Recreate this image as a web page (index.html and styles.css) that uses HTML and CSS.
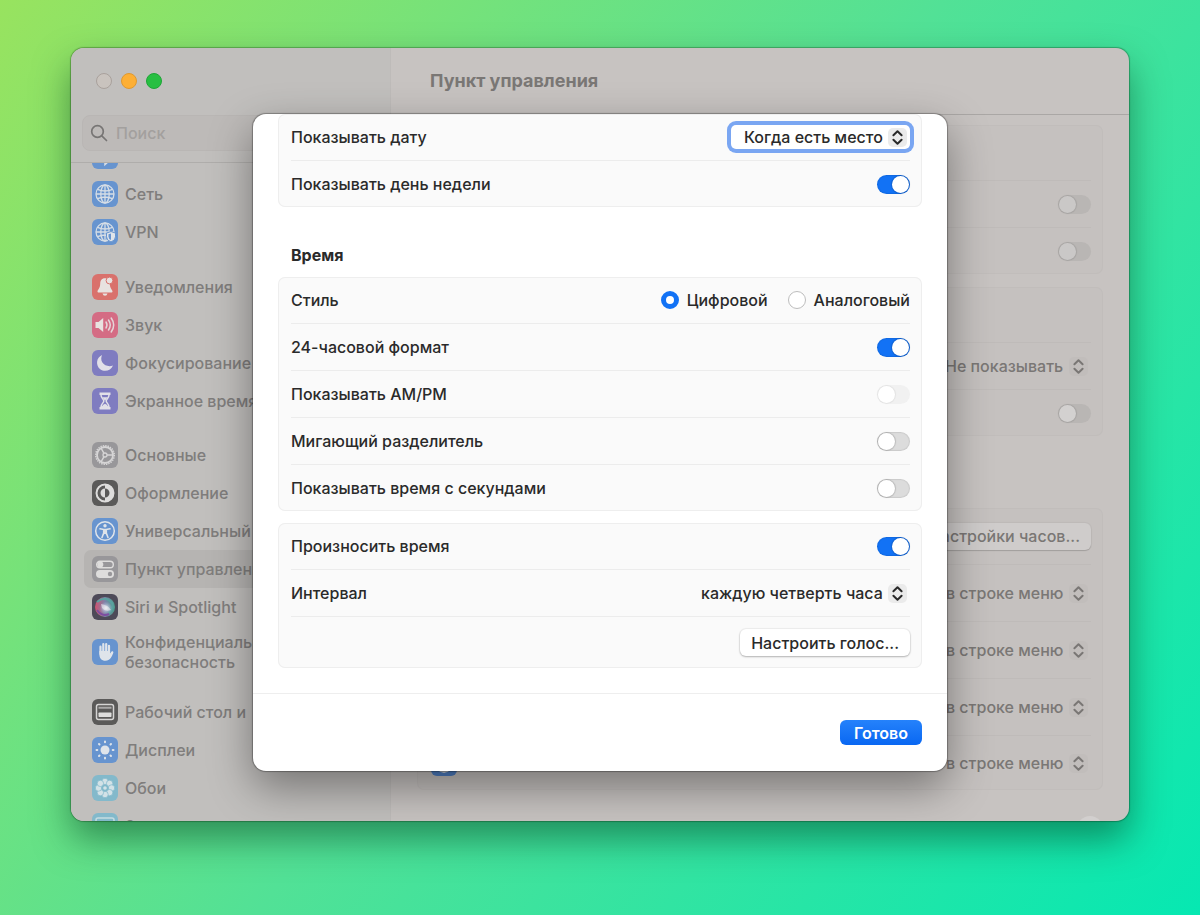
FILE: index.html
```html
<!DOCTYPE html>
<html lang="ru">
<head>
<meta charset="utf-8">
<meta name="viewport" content="width=device-width, initial-scale=1">
<title>Пункт управления</title>
<link rel="stylesheet" href="styles.css">
</head>
<body>
<svg class="defs" aria-hidden="true">
  <defs>
    <symbol id="updown" viewBox="0 0 19 19"><path d="M5.400 7.300 9.500 3.300l4.100 4M5.400 11.700l4.100 4 4.100-4" fill="none" stroke="currentColor" stroke-width="2" stroke-linecap="round" stroke-linejoin="round"/></symbol>
    <symbol id="globe" viewBox="0 0 26 26"><g fill="none" stroke="#d5dde6" stroke-width="1.3"><circle cx="13" cy="13" r="9"/><ellipse cx="13" cy="13" rx="4.2" ry="9"/><path d="M4 13h18M13 4v18M5.5 8.3q7.500 3.400 15 0M5.500 17.700q7.500-3.400 15 0"/></g></symbol>
  </defs>
</svg>
<div class="window">
  <aside class="sidebar">
    <div class="lights"><button class="light" aria-label="Закрыть"></button><button class="light light-min" aria-label="Свернуть"></button><button class="light light-max" aria-label="Развернуть"></button></div>
    <label class="search">
      <svg width="18" height="18" viewBox="0 0 18 18" fill="none" stroke="#777574" stroke-width="1.7" stroke-linecap="round"><circle cx="7.500" cy="7.500" r="5.800"/><path d="m11.800 11.800 4.700 4.700"/></svg>
      <input type="search" placeholder="Поиск" aria-label="Поиск">
    </label>
    <nav class="nav">
      <ul class="group group-first">
        <li><a href="#bluetooth" class="item" aria-label="Bluetooth"><svg class="icon blue" viewBox="0 0 26 26"><path d="m8 8 10 9-5 4.500V4.500L18 9 8 18" fill="none" stroke="#d5dde6" stroke-width="1.600"/></svg></a></li>
        <li><a href="#network" class="item"><svg class="icon blue" viewBox="0 0 26 26"><use href="#globe"/></svg>Сеть</a></li>
        <li><a href="#vpn" class="item"><svg class="icon blue" viewBox="0 0 26 26"><use href="#globe"/><path d="M19 12.500l4.500 1.600v3.700q0 3.500-4.500 5.200-4.500-1.700-4.500-5.200v-3.700z" fill="#dfe4ea" stroke="#6794cf"/><path d="M19 14.500v6.500q-2.500-1-2.500-3.500v-2.200z" fill="#6794cf"/></svg>VPN</a></li>
      </ul>
      <ul class="group">
        <li><a href="#notifications" class="item"><svg class="icon red" viewBox="0 0 26 26"><path d="M13 4.200c-3.600 0-4.800 2.700-4.800 5.600 0 4.600-2.700 6-2.700 7.700 0 .8.500 1 1.200 1h12.600c.7 0 1.200-.2 1.200-1 0-1.700-2.700-3.100-2.700-7.700 0-2.900-1.200-5.600-4.800-5.600zM10.500 19.600h5q-.6 2.200-2.500 2.200t-2.500-2.200z" fill="#e8e2e0"/><circle cx="17.500" cy="6.500" r="3.400" fill="#e8e2e0" stroke="#d9716c"/></svg>Уведомления</a></li>
        <li><a href="#sound" class="item"><svg class="icon pink" viewBox="0 0 26 26"><path d="M3.500 10h3l4.700-4v14l-4.700-4h-3z" fill="#e8e2e0"/><path d="M14 10q2 3 0 6M16.500 8q3.500 5 0 10M19.200 6q5 7 0 14" fill="none" stroke="#e5d5d8" stroke-width="1.500" stroke-linecap="round"/></svg>Звук</a></li>
        <li><a href="#focus" class="item"><svg class="icon violet" viewBox="0 0 26 26"><path d="M10.200 5C4 7.500 3.500 15.500 8.200 19.200c4.500 3.300 10.800 1.400 12.800-3.700-4 1.500-8.500.3-10.600-2.900C8.900 10.200 8.900 7.400 10.200 5z" fill="#e2e0e8"/></svg>Фокусирование</a></li>
        <li><a href="#screentime" class="item"><svg class="icon violet" viewBox="0 0 26 26"><path d="M7.500 4.500h11V7h-11zM7.500 19h11v2.500h-11z" fill="#e2e0e8"/><path d="M9 7c0 3 2.800 4.300 2.800 6S9 16 9 19h8c0-3-2.800-4.300-2.800-6S17 10 17 7" fill="none" stroke="#e2e0e8" stroke-width="1.500"/><path d="M10.300 9.300h5.400L13 12.700zM9.800 19q.6-2.600 3.200-3.300 2.600.7 3.200 3.300z" fill="#e2e0e8"/></svg>Экранное время</a></li>
      </ul>
      <ul class="group">
        <li><a href="#general" class="item"><svg class="icon gray" viewBox="0 0 26 26"><g fill="none" stroke="#d6d5d6"><circle cx="13" cy="13" r="8" stroke-width="1.800"/><circle cx="13" cy="13" r="9.300" stroke-width="1.500" stroke-dasharray="1.400 1.030"/><circle cx="13" cy="13" r="2" stroke-width="1.300"/><path d="M15 13h6M12 11.300 9 6M12 14.700 9 20" stroke-width="1.500"/></g></svg>Основные</a></li>
        <li><a href="#appearance" class="item"><svg class="icon dark" viewBox="0 0 26 26"><circle cx="13" cy="13" r="8.500" fill="none" stroke="#dedddc" stroke-width="2"/><path d="M13 4.500a8.500 8.500 0 0 1 0 17v-4a4.500 4.500 0 0 0 0-9zM13 8.500v9a4.500 4.500 0 0 1 0-9z" fill="#dedddc"/></svg>Оформление</a></li>
        <li><a href="#accessibility" class="item"><svg class="icon blue" viewBox="0 0 26 26"><circle cx="13" cy="13" r="9.300" fill="none" stroke="#dfe4ea" stroke-width="1.500"/><circle cx="13" cy="7.800" r="1.700" fill="#dfe4ea"/><path d="m8 10.800 5 .9 5-.9M11.700 12v3L10 19.500M14.300 12v3l1.700 4.500M13 11.500v4" fill="none" stroke="#dfe4ea" stroke-width="1.600" stroke-linecap="round"/></svg>Универсальный доступ</a></li>
        <li><a href="#control" class="item selected" aria-current="page"><svg class="icon gray" viewBox="0 0 26 26"><rect x="4.700" y="5.200" width="16.600" height="6.600" rx="3.300" fill="none" stroke="#dedddc" stroke-width="1.400"/><circle cx="8.300" cy="8.500" r="3" fill="#dedddc"/><rect x="4" y="14" width="18" height="8" rx="4" fill="#dedddc"/><circle cx="18" cy="18" r="2.200" fill="#98979a"/></svg>Пункт управления</a></li>
        <li><a href="#siri" class="item"><svg class="icon siri" viewBox="0 0 26 26"><defs><linearGradient id="sg"><stop stop-color="#d0526f"/><stop offset=".5" stop-color="#7c83a8"/><stop offset="1" stop-color="#4ba08c"/></linearGradient><radialGradient id="sw"><stop stop-color="#f0eef2"/><stop offset="1" stop-color="#a9b5d8" stop-opacity="0"/></radialGradient></defs><circle cx="13" cy="13" r="10" fill="url(#sg)"/><path d="M5 8q8-7 15 1 2 6-3 10" fill="none" stroke="#5aa1a0" stroke-width="2"/><path d="M5 16q5 7 12 4" fill="none" stroke="#7c4da0" stroke-width="2"/><circle cx="14" cy="14" r="6.500" fill="url(#sw)"/><path d="M9 10q7 1 10 6-6 2-9-2z" fill="#efeef2" opacity=".6"/></svg>Siri и Spotlight</a></li>
        <li><a href="#privacy" class="item item-tall"><svg class="icon blue" viewBox="0 0 26 26"><path d="M8.500 15V7.700M11.300 12V5.200M14.200 12V5M17 13V6.800" stroke="#dfe4ea" stroke-width="2.200" stroke-linecap="round"/><path d="M7.400 12h10.700v2.500l1.300-1.700c.8-1 2.400-.3 1.900 1-1.500 4-3.200 8-7.800 8-4.100 0-6.100-2.800-6.100-6.300z" fill="#dfe4ea"/></svg><span>Конфиденциальность и<br>безопасность</span></a></li>
      </ul>
      <ul class="group">
        <li><a href="#desktop" class="item"><svg class="icon dark" viewBox="0 0 26 26"><rect x="4.500" y="5.500" width="17" height="15" rx="2" fill="none" stroke="#d5d4d3" stroke-width="1.500"/><path d="M6.500 7.800h13v2h-13z" fill="#aaa9a8"/><rect x="6.500" y="13.500" width="13" height="4.500" rx=".8" fill="#dedddc"/></svg>Рабочий стол и</a></li>
        <li><a href="#displays" class="item"><svg class="icon blue" viewBox="0 0 26 26"><circle cx="13" cy="13" r="4.500" fill="#dfe4ea"/><g stroke="#dfe4ea" stroke-width="2" stroke-linecap="round"><path d="M13 4.500v.8M13 20.700v.8M4.500 13h.8M20.700 13h.8M7 7l.5.500M18.500 18.500l.5.500M19 7l-.5.500M7.500 18.500 7 19"/></g></svg>Дисплеи</a></li>
        <li><a href="#wallpaper" class="item"><svg class="icon cyan" viewBox="0 0 26 26"><g fill="#d3e2e7" stroke="#83b9cb" stroke-width=".7"><circle cx="13" cy="6.500" r="3.200"/><circle cx="17.600" cy="8.400" r="3.200"/><circle cx="19.500" cy="13" r="3.200"/><circle cx="17.600" cy="17.600" r="3.200"/><circle cx="13" cy="19.500" r="3.200"/><circle cx="8.400" cy="17.600" r="3.200"/><circle cx="6.500" cy="13" r="3.200"/><circle cx="8.400" cy="8.400" r="3.200"/></g><circle cx="13" cy="13" r="3.200" fill="#83b9cb"/><circle cx="13" cy="13" r="1.800" fill="#d3e2e7"/></svg>Обои</a></li>
        <li><a href="#screensaver" class="item"><svg class="icon cyan" viewBox="0 0 26 26"><rect x="4" y="5" width="18" height="14" rx="2" fill="none" stroke="#c6dbe1" stroke-width="1.500"/></svg>Заставка</a></li>
      </ul>
    </nav>
  </aside>

  <main class="main">
    <header class="header"><h1>Пункт управления</h1></header>
    <div class="pane">
      <section class="panel">
        <div class="line line-top"></div>
        <div class="line"><input type="checkbox" role="switch" class="toggle dim" aria-label="Показывать в Пункте управления"></div>
        <div class="line"><input type="checkbox" role="switch" class="toggle dim" aria-label="Показывать в строке меню"></div>
      </section>
      <section class="panel">
        <div class="line line-top"></div>
        <div class="line"><span class="pick"><select aria-label="Показ в строке меню"><option>Не показывать</option></select><svg><use href="#updown"/></svg></span></div>
        <div class="line"><input type="checkbox" role="switch" class="toggle dim bright" aria-label="Показывать проценты"></div>
      </section>
      <section class="panel panel-menu">
        <div class="line line-tall"><button class="btn btn-dim">Настройки часов...</button></div>
        <div class="line line-tall"><span class="pick"><select aria-label="Spotlight"><option>в строке меню</option></select><svg><use href="#updown"/></svg></span></div>
        <div class="line line-tall"><span class="pick"><select aria-label="Siri"><option>в строке меню</option></select><svg><use href="#updown"/></svg></span></div>
        <div class="line line-tall"><span class="pick"><select aria-label="Time Machine"><option>в строке меню</option></select><svg><use href="#updown"/></svg></span></div>
        <div class="line line-tall"><svg class="icon vpn" viewBox="0 0 26 26"><use href="#globe"/></svg><span class="pick"><select aria-label="VPN"><option>в строке меню</option></select><svg><use href="#updown"/></svg></span></div>
      </section>
      <button class="help" aria-label="Справка"></button>
    </div>
  </main>

  <div class="sheet" role="dialog" aria-modal="true" aria-label="Настройки часов">
    <div class="sheet-body">
      <section class="card">
        <div class="row"><label for="date">Показывать дату</label><span class="pick focused"><select id="date"><option>Когда есть место</option></select><svg><use href="#updown"/></svg></span></div>
        <div class="row"><label for="weekday">Показывать день недели</label><input id="weekday" type="checkbox" role="switch" class="toggle" checked></div>
      </section>
      <h2>Время</h2>
      <section class="card">
        <div class="row" role="radiogroup" aria-labelledby="style"><span id="style">Стиль</span><span class="radios"><label><input type="radio" name="style" checked>Цифровой</label><label><input type="radio" name="style">Аналоговый</label></span></div>
        <div class="row"><label for="h24">24-часовой формат</label><input id="h24" type="checkbox" role="switch" class="toggle" checked></div>
        <div class="row"><label for="ampm">Показывать AM/PM</label><input id="ampm" type="checkbox" role="switch" class="toggle" disabled></div>
        <div class="row"><label for="blink">Мигающий разделитель</label><input id="blink" type="checkbox" role="switch" class="toggle"></div>
        <div class="row"><label for="seconds">Показывать время с секундами</label><input id="seconds" type="checkbox" role="switch" class="toggle"></div>
      </section>
      <section class="card card-voice">
        <div class="row"><label for="speak">Произносить время</label><input id="speak" type="checkbox" role="switch" class="toggle" checked></div>
        <div class="row"><label for="interval">Интервал</label><span class="pick"><select id="interval"><option>каждую четверть часа</option></select><svg><use href="#updown"/></svg></span></div>
        <div class="row row-button"><button class="btn">Настроить голос...</button></div>
      </section>
    </div>
    <footer class="sheet-foot"><button class="done">Готово</button></footer>
  </div>
</div>
</body>
</html>
```
FILE: styles.css
```css
* { box-sizing: border-box; }

body {
  margin: 0;
  height: 100vh;
  padding: 48px 71px 94px;
  display: flex;
  background: linear-gradient(127deg, #98e35f, #52e196 50%, #06e8b2);
  font: 500 16px/20px Inter, "Noto Sans", sans-serif;
  color: #2a2a2a;
}

button, input, select { font: inherit; color: inherit; margin: 0; }
h1, h2, ul { margin: 0; padding: 0; }
ul { list-style: none; }
.defs { position: absolute; width: 0; height: 0; }

.window {
  position: relative;
  flex: 1;
  display: grid;
  grid-template-columns: 320px 1fr;
  min-height: 0;
  border-radius: 13px;
  overflow: hidden;
  background: #c7c3c1;
  color: #7a7775;
  box-shadow: 0 0 1px 1px rgba(0, 40, 0, .3), 0 18px 36px rgba(0, 60, 30, .5);
}

/* sidebar */
.sidebar {
  display: flex;
  flex-direction: column;
  min-height: 0;
  background: #c1bfbd;
  border-right: 1px solid #bebbb9;
  color: #7f7d7c;
}
.lights { display: flex; gap: 9px; padding: 25px 25px 0; height: 67px; }
.light { width: 16px; height: 16px; padding: 0; border: 1px solid #a9a19c; border-radius: 50%; background: #c9c3be; }
.light-min { background: #fdaf35; border-color: #df9930; }
.light-max { background: #28bf42; border-color: #1ea637; }
.search {
  display: flex;
  align-items: center;
  gap: 8px;
  height: 36px;
  margin: 0 11px 11px;
  padding: 0 7px;
  border: 1px solid #b9b6b4;
  border-radius: 8px;
  background: #bdbab8;
}
.search input { flex: 1; min-width: 0; padding: 0; border: 0; background: none; outline: 0; }
.search input::placeholder { color: #a3a09e; opacity: 1; }
.nav { flex: 1; min-height: 0; overflow: hidden; border-top: 1px solid #afadab; padding: 0 11px 0 13px; }
.group { margin-bottom: 16px; }
.group-first { margin-top: -26px; margin-bottom: 17px; }
.item {
  display: flex;
  align-items: center;
  gap: 7px;
  height: 38px;
  padding: 0 8px;
  border-radius: 7px;
  color: inherit;
  text-decoration: none;
  white-space: nowrap;
}
.item-tall { height: 51px; }
.selected { background: #b6b4b2; }
.icon { width: 26px; height: 26px; flex: none; border-radius: 6px; }
.blue { background: #6794cf; }
.red { background: #d9716c; }
.pink { background: #d46c84; }
.violet { background: #7f7cc0; }
.gray { background: #98979a; }
.dark { background: #5b5a59; }
.siri { background: #4d4a58; }
.cyan { background: #83b9cb; }

/* main pane */
.main { display: flex; flex-direction: column; min-height: 0; }
.header { height: 67px; flex: none; padding: 22px 39px; border-bottom: 1px solid #aaa7a5; }
h1 { font-size: 18px; line-height: 22px; font-weight: 700; }
.pane { flex: 1; min-height: 0; overflow: hidden; display: flex; flex-direction: column; gap: 13px; padding: 10px 26px 0; }
.panel { flex: none; border-radius: 7px; background: #c5c1bf; box-shadow: inset 0 0 0 1px #c1bdbb; padding: 0 12px 0 14px; }
.panel-menu { margin-top: 59px; }
.line { display: flex; align-items: center; justify-content: flex-end; height: 47px; border-bottom: 1px solid #bfbbb9; }
.line:last-child { border-bottom: 0; height: 46px; }
.line-top { height: 56px; }
.line-tall { height: 57px; }
.line-tall:last-child { height: 54px; }
.vpn { margin-right: auto; background: #4f7fc4; }
.help { flex: none; align-self: flex-end; width: 26px; height: 26px; margin: 13px 0 0; border: 0; border-radius: 50%; background: #d2cfce; }

/* controls */
.toggle {
  appearance: none;
  flex: none;
  width: 33px;
  height: 19px;
  padding: 1px;
  border-radius: 10px;
  background: #dcdcdc;
  box-shadow: inset 0 0 1px 1px rgba(0, 0, 0, .08);
  display: flex;
}
.toggle::before { content: ""; width: 17px; height: 17px; border-radius: 50%; background: #fff; box-shadow: 0 0 1px 1px rgba(0, 0, 0, .15); }
.toggle:checked { background: #1272f5; justify-content: flex-end; }
.toggle:disabled { background: #f1f1f1; box-shadow: none; }
.toggle:disabled::before { box-shadow: 0 0 1px 1px rgba(0, 0, 0, .06); }
.dim { background: #b9b6b4; box-shadow: none; }
.dim::before { background: #cac8c7; box-shadow: 0 0 1px 1px rgba(0, 0, 0, .1); }
.bright::before { background: #d3d1d0; }

.pick { position: relative; display: flex; border-radius: 5px; }
.pick select {
  appearance: none;
  height: 24px;
  padding: 0 27px 0 13px;
  border: 0;
  border-radius: 5px;
  background: none;
  outline: 0;
  line-height: 24px;
}
.pick svg { position: absolute; right: 3px; top: 3px; width: 19px; height: 19px; border-radius: 5px; background: #ebebeb; pointer-events: none; }
.focused { background: #fff; box-shadow: 0 0 0 4px #7aa6f2; }
.panel .pick svg { background: #c1bdbb; }

.btn {
  height: 27px;
  padding: 0 11px;
  border: 0;
  border-radius: 6px;
  background: #fff;
  box-shadow: 0 0 1px 1px rgba(0, 0, 0, .05), 0 1px 2px rgba(0, 0, 0, .25);
}
.btn-dim { background: #cfcccb; box-shadow: 0 0 1px 1px rgba(0, 0, 0, .04), 0 1px 1px rgba(0, 0, 0, .15); }

/* sheet */
.sheet {
  position: absolute;
  top: 66px;
  left: 0;
  right: 0;
  width: 694px;
  max-width: 100%;
  margin: 0 auto;
  border-radius: 13px;
  overflow: hidden;
  background: #fff;
  color: #2a2a2a;
  box-shadow: 0 0 1px 1px rgba(0, 0, 0, .3), 0 16px 44px rgba(0, 0, 0, .4);
}
.sheet-body { padding: 0 25px 25px; }
.card { padding: 0 12px 0 13px; border-radius: 7px; background: #fafafa; box-shadow: inset 0 0 0 1px #eee; }
.card-voice { margin-top: 12px; }
.row { display: flex; align-items: center; justify-content: space-between; height: 47px; border-bottom: 1px solid #ececec; }
.row:last-child { border-bottom: 0; height: 46px; }
.row-button:last-child { height: 51px; justify-content: flex-end; }
h2 { margin: 37px 13px 11px; font-size: 16px; line-height: 22px; font-weight: 700; }
.radios { display: flex; gap: 20px; }
.radios label { display: flex; align-items: center; gap: 8px; }
.radios input { appearance: none; width: 18px; height: 18px; border: 1px solid #bdbdbd; border-radius: 50%; background: #fff; }
.radios input:checked { border: 5px solid #1272f5; }
.sheet-foot { display: flex; justify-content: flex-end; padding: 26px 25px; border-top: 1px solid #eee; }
.done { height: 25px; padding: 0 14px; border: 0; border-radius: 6px; background: linear-gradient(#2582fb, #0967f2); color: #fff; font-weight: 600; line-height: 24px; }
```
